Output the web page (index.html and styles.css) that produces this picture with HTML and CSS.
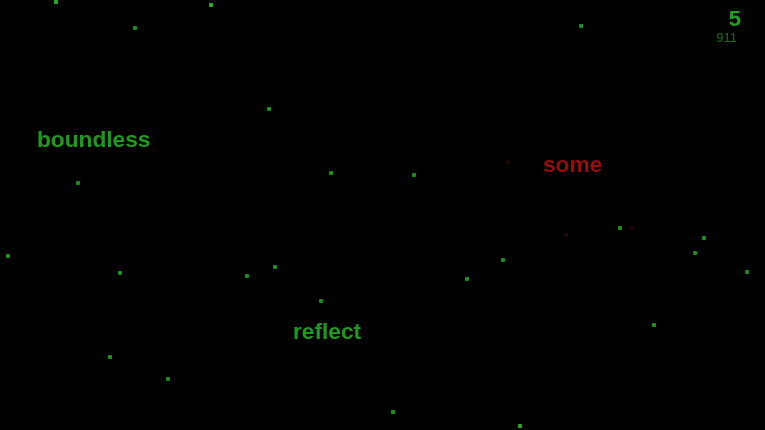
FILE: index.html
```html
<!DOCTYPE html>
<html>
<head>
<meta charset="utf-8">
<link rel="stylesheet" href="styles.css">
</head>
<body>
<div class="field">
  <div class="dot bright" style="left:56px;top:2px"></div>
  <div class="dot bright" style="left:211px;top:5px"></div>
  <div class="dot" style="left:135px;top:28px"></div>
  <div class="dot" style="left:581px;top:26px"></div>
  <div class="dot" style="left:269px;top:109px"></div>
  <div class="dot" style="left:78px;top:183px"></div>
  <div class="dot" style="left:331px;top:173px"></div>
  <div class="dot" style="left:414px;top:175px"></div>
  <div class="dot" style="left:8px;top:256px"></div>
  <div class="dot" style="left:120px;top:273px"></div>
  <div class="dot" style="left:247px;top:276px"></div>
  <div class="dot" style="left:275px;top:267px"></div>
  <div class="dot" style="left:467px;top:279px"></div>
  <div class="dot" style="left:503px;top:260px"></div>
  <div class="dot" style="left:620px;top:228px"></div>
  <div class="dot" style="left:704px;top:238px"></div>
  <div class="dot" style="left:695px;top:253px"></div>
  <div class="dot" style="left:747px;top:272px"></div>
  <div class="dot" style="left:321px;top:301px"></div>
  <div class="dot" style="left:654px;top:325px"></div>
  <div class="dot" style="left:110px;top:357px"></div>
  <div class="dot" style="left:168px;top:379px"></div>
  <div class="dot" style="left:393px;top:412px"></div>
  <div class="dot bright" style="left:520px;top:426px"></div>
  <div class="dot faint" style="left:508px;top:162px"></div>
  <div class="dot faint" style="left:566px;top:235px"></div>
  <div class="dot faint" style="left:632px;top:229px"></div>

  <div class="word green" style="left:37px;top:128px">boundless</div>
  <div class="word red" style="left:543px;top:153px">some</div>
  <div class="word green" style="left:293px;top:320px">reflect</div>

  <div class="hud">
    <div class="score">5</div>
    <div class="code">911</div>
  </div>
</div>
</body>
</html>
```
FILE: styles.css
```css
html, body {
  margin: 0;
  padding: 0;
  background: #000;
}
.field {
  position: relative;
  width: 765px;
  height: 430px;
  overflow: hidden;
  background: #000;
  font-family: "Liberation Sans", Arial, sans-serif;
}
.dot {
  position: absolute;
  width: 4px;
  height: 4px;
  margin: -2px 0 0 -2px;
  border-radius: 1px;
  background: #1c901c;
  filter: blur(0.5px);
}
.dot.bright {
  background: #22b022;
}
.dot.faint {
  background: #200404;
}
.word {
  position: absolute;
  font-size: 22.7px;
  font-weight: bold;
  line-height: 1;
  white-space: nowrap;
  filter: blur(0.45px);
}
.green {
  color: #1f9a1f;
}
.red {
  color: #9a0c0c;
}
.hud {
  position: absolute;
  top: 8px;
  right: 24px;
  display: flex;
  flex-direction: column;
  align-items: flex-end;
  filter: blur(0.35px);
}
.score {
  font-size: 22px;
  font-weight: bold;
  line-height: 1;
  color: #22a022;
}
.code {
  font-size: 13px;
  line-height: 1;
  color: #1a6e1a;
  margin-top: 1px;
  margin-right: 4px;
}
```
